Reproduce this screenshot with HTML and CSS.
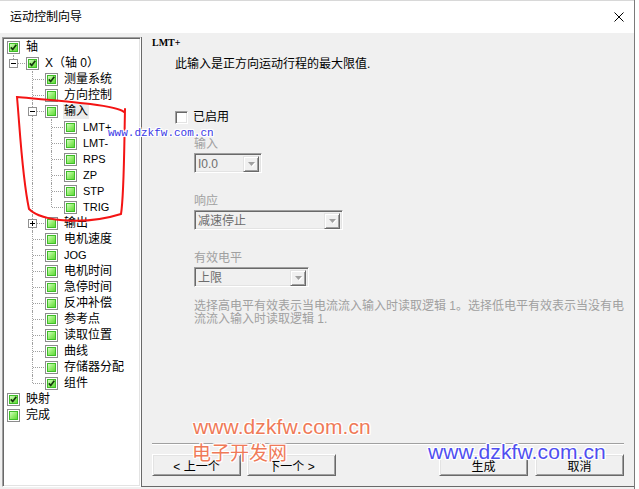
FILE: index.html
```html
<!DOCTYPE html>
<html lang="zh-CN">
<head>
    <meta charset="UTF-8">
    <title>运动控制向导</title>
    <link rel="stylesheet" href="styles.css">
</head>
<body>
    <div class="win">
        <!-- Pasek tytułu -->
        <div class="titlebar">
            <span>运动控制向导</span>
            <svg class="close" width="10" height="10" viewBox="0 0 10 10"><path d="M0.5 0.5L9.5 9.5M9.5 0.5L0.5 9.5"/></svg>
        </div>

        <div class="main">
            <!-- Drzewo po lewej -->
            <div class="tree">
                <div class="row"><span class="cb"><b><svg viewBox="0 0 7 7"><path d="M0.8 3.4l1.9 2 3.6-4.6"/></svg></b></span><span class="txt">轴</span></div>
                <div class="row"><span class="g l"><i class="exp"></i></span><span class="cb"><b><svg viewBox="0 0 7 7"><path d="M0.8 3.4l1.9 2 3.6-4.6"/></svg></b></span><span class="txt">X（轴 0）</span></div>
                <div class="row"><span class="g"></span><span class="g t"></span><span class="cb"><b><svg viewBox="0 0 7 7"><path d="M0.8 3.4l1.9 2 3.6-4.6"/></svg></b></span><span class="txt">测量系统</span></div>
                <div class="row"><span class="g"></span><span class="g t"></span><span class="cb"><b></b></span><span class="txt">方向控制</span></div>
                <div class="row"><span class="g"></span><span class="g t"><i class="exp"></i></span><span class="cb"><b></b></span><span class="txt sel">输入</span></div>
                <div class="row"><span class="g"></span><span class="g v"></span><span class="g t"></span><span class="cb"><b></b></span><span class="txt en">LMT+</span></div>
                <div class="row"><span class="g"></span><span class="g v"></span><span class="g t"></span><span class="cb"><b></b></span><span class="txt en">LMT-</span></div>
                <div class="row"><span class="g"></span><span class="g v"></span><span class="g t"></span><span class="cb"><b></b></span><span class="txt en">RPS</span></div>
                <div class="row"><span class="g"></span><span class="g v"></span><span class="g t"></span><span class="cb"><b></b></span><span class="txt en">ZP</span></div>
                <div class="row"><span class="g"></span><span class="g v"></span><span class="g t"></span><span class="cb"><b></b></span><span class="txt en">STP</span></div>
                <div class="row"><span class="g"></span><span class="g v"></span><span class="g l"></span><span class="cb"><b></b></span><span class="txt en">TRIG</span></div>
                <div class="row"><span class="g"></span><span class="g t"><i class="exp plus"></i></span><span class="cb"><b></b></span><span class="txt">输出</span></div>
                <div class="row"><span class="g"></span><span class="g t"></span><span class="cb"><b></b></span><span class="txt">电机速度</span></div>
                <div class="row"><span class="g"></span><span class="g t"></span><span class="cb"><b></b></span><span class="txt en">JOG</span></div>
                <div class="row"><span class="g"></span><span class="g t"></span><span class="cb"><b></b></span><span class="txt">电机时间</span></div>
                <div class="row"><span class="g"></span><span class="g t"></span><span class="cb"><b></b></span><span class="txt">急停时间</span></div>
                <div class="row"><span class="g"></span><span class="g t"></span><span class="cb"><b></b></span><span class="txt">反冲补偿</span></div>
                <div class="row"><span class="g"></span><span class="g t"></span><span class="cb"><b></b></span><span class="txt">参考点</span></div>
                <div class="row"><span class="g"></span><span class="g t"></span><span class="cb"><b></b></span><span class="txt">读取位置</span></div>
                <div class="row"><span class="g"></span><span class="g t"></span><span class="cb"><b></b></span><span class="txt">曲线</span></div>
                <div class="row"><span class="g"></span><span class="g t"></span><span class="cb"><b></b></span><span class="txt">存储器分配</span></div>
                <div class="row"><span class="g"></span><span class="g l"></span><span class="cb"><b><svg viewBox="0 0 7 7"><path d="M0.8 3.4l1.9 2 3.6-4.6"/></svg></b></span><span class="txt">组件</span></div>
                <div class="row"><span class="cb"><b><svg viewBox="0 0 7 7"><path d="M0.8 3.4l1.9 2 3.6-4.6"/></svg></b></span><span class="txt">映射</span></div>
                <div class="row"><span class="cb"><b></b></span><span class="txt">完成</span></div>
            </div>

            <!-- Strona po prawej -->
            <div class="page">
                <div class="head">LMT+</div>
                <div class="desc">此输入是正方向运动行程的最大限值.</div>

                <div class="enable"><span class="chk"></span><span>已启用</span></div>

                <div class="fields">
                    <div class="flabel">输入</div>
                    <div class="combo w1"><span class="val">I0.0</span><span class="drop"><svg width="7" height="4" viewBox="0 0 7 4"><path d="M0 0h7L3.5 4z"/></svg></span></div>

                    <div class="flabel">响应</div>
                    <div class="combo w2"><span class="val">减速停止</span><span class="drop"><svg width="7" height="4" viewBox="0 0 7 4"><path d="M0 0h7L3.5 4z"/></svg></span></div>

                    <div class="flabel">有效电平</div>
                    <div class="combo w3"><span class="val">上限</span><span class="drop"><svg width="7" height="4" viewBox="0 0 7 4"><path d="M0 0h7L3.5 4z"/></svg></span></div>

                    <p class="help">选择高电平有效表示当电流流入输入时读取逻辑 1。选择低电平有效表示当没有电流流入输入时读取逻辑 1.</p>
                </div>

                <div class="footer">
                    <div class="sep"></div>
                    <div class="btns">
                        <button class="btn">&lt; 上一个</button>
                        <button class="btn">下一个 &gt;</button>
                        <div class="right">
                            <button class="btn">生成</button>
                            <button class="btn">取消</button>
                        </div>
                    </div>
                </div>
            </div>
        </div>

        <!-- Nakładki: zakreślenie i znaki wodne -->
        <svg class="mark" width="140" height="140" viewBox="0 90 140 140"><path d="M124 112C116 105 62 101 17 97C20 130 22 176 29 209C42 222 86 225 121 214C124 196 124 158 125 109"/></svg>
        <div class="wm wm-mono">www.dzkfw.com.cn</div>
        <div class="wm wm-red">www.dzkfw.com.cn</div>
        <div class="wm wm-cn">电子开发网</div>
        <div class="wm wm-blue">www.dzkfw.com.cn</div>
    </div>
</body>
</html>
```

FILE: styles.css
```css
body {
    margin: 0;
    background: #fff;
    font-family: "Liberation Sans", "Noto Sans CJK SC", sans-serif;
    font-size: 12px;
    color: #000;
}
.win {
    position: relative;
    width: 635px;
    height: 489px;
    box-sizing: border-box;
    border-right: 1px solid #7a7a7a;
    display: flex;
    flex-direction: column;
    overflow: hidden;
}
.titlebar {
    height: 33px;
    flex: none;
    background: #fff;
    border-top: 1px solid #d8d8d8;
    box-sizing: border-box;
    display: flex;
    align-items: center;
    justify-content: space-between;
    padding: 0 10px;
    line-height: 16px;
}
.close path {
    stroke: #000;
    stroke-width: 1;
    fill: none;
}
.main {
    flex: 1;
    display: flex;
    background: #f0f0f0;
    padding: 4px 0 2px 2px;
}

/* drzewo */
.tree {
    width: 139px;
    flex: none;
    box-sizing: border-box;
    background: #fff;
    border: 1px solid;
    border-color: #a0a0a0 #fff #fff #a0a0a0;
    box-shadow: inset 1px 1px 0 #696969, inset -1px -1px 0 #e3e3e3;
    padding: 1px 0 0 1px;
}
.row {
    display: flex;
    align-items: center;
    height: 16px;
    padding-left: 3px;
    white-space: nowrap;
}
.g {
    position: relative;
    width: 19px;
    height: 16px;
    flex: none;
}
.g.v::before, .g.t::before, .g.l::before {
    content: '';
    position: absolute;
    left: 6px;
    top: 0;
    bottom: 0;
    border-left: 1px dotted #a0a0a0;
}
.g.l::before {
    bottom: 8px;
}
.g.t::after, .g.l::after {
    content: '';
    position: absolute;
    left: 7px;
    right: 1px;
    top: 8px;
    border-top: 1px dotted #a0a0a0;
}
.exp {
    position: absolute;
    z-index: 1;
    left: 2px;
    top: 4px;
    width: 9px;
    height: 9px;
    box-sizing: border-box;
    border: 1px solid #919191;
    background: #fff;
}
.exp::before {
    content: '';
    position: absolute;
    left: 1px;
    top: 3px;
    width: 5px;
    height: 1px;
    background: #000;
}
.exp.plus::after {
    content: '';
    position: absolute;
    left: 3px;
    top: 1px;
    width: 1px;
    height: 5px;
    background: #000;
}
.cb {
    flex: none;
    width: 13px;
    height: 13px;
    box-sizing: border-box;
    border: 1px solid #8c8c8c;
    padding: 1px;
    background: #fff;
}
.cb b {
    display: block;
    width: 9px;
    height: 9px;
    box-sizing: border-box;
    border: 1px solid #3fbd29;
    background: linear-gradient(135deg, #d3fbbf 0%, #8eec68 55%, #62d83d 100%);
}
.cb svg {
    display: block;
    width: 7px;
    height: 7px;
    fill: none;
    stroke: #17380f;
    stroke-width: 1.7;
}
.txt {
    margin-left: 5px;
    padding: 0 1px;
    line-height: 15px;
}
.txt.en {
    font-size: 11px;
}
.txt.sel {
    background: #ebebeb;
}

/* strona */
.page {
    flex: 1;
    display: flex;
    flex-direction: column;
    border-left: 1px solid #696969;
    border-bottom: 1px solid #696969;
}
.head {
    margin: 0 0 0 10px;
    font-family: "Liberation Serif", serif;
    font-weight: bold;
    font-size: 10px;
    line-height: 11px;
}
.desc {
    margin: 8px 0 0 33px;
    line-height: 16px;
}
.enable {
    display: flex;
    align-items: center;
    height: 13px;
    margin: 39px 0 0 33px;
    line-height: 13px;
}
.chk {
    width: 13px;
    height: 13px;
    box-sizing: border-box;
    background: #fff;
    border: 1px solid;
    border-color: #a0a0a0 #fff #fff #a0a0a0;
    box-shadow: inset 1px 1px 0 #696969, inset -1px -1px 0 #e3e3e3;
    margin-right: 5px;
}
.fields {
    margin-left: 52px;
}
.flabel {
    color: #a0a0a0;
    line-height: 14px;
    margin-top: 21px;
}
.fields .flabel:first-child {
    margin-top: 13px;
}
.combo {
    display: flex;
    margin-top: 2px;
    height: 20px;
    box-sizing: border-box;
    background: #f0f0f0;
    border: 1px solid;
    border-color: #a0a0a0 #fff #fff #a0a0a0;
    box-shadow: inset 1px 1px 0 #696969, inset -1px -1px 0 #e3e3e3;
    padding: 2px 2px 1px 2px;
}
.w1 { width: 68px; }
.w2 { width: 149px; }
.w3 { width: 115px; }
.val {
    flex: 1;
    padding-left: 1px;
    line-height: 16px;
    color: #6d6d6d;
}
.drop {
    width: 16px;
    height: 16px;
    box-sizing: border-box;
    display: flex;
    align-items: center;
    justify-content: center;
    border: 1px solid;
    border-color: #e3e3e3 #696969 #696969 #e3e3e3;
    box-shadow: inset 1px 1px 0 #fff, inset -1px -1px 0 #a0a0a0;
}
.drop svg {
    fill: #a0a0a0;
    filter: drop-shadow(1px 1px 0 #fff);
}
.help {
    margin: 13px 0 0;
    width: 434px;
    color: #a0a0a0;
    line-height: 13px;
}
.footer {
    margin-top: auto;
}
.sep {
    margin: 0 10px;
    border-top: 1px solid #a0a0a0;
    border-bottom: 1px solid #fff;
}
.btns {
    display: flex;
    gap: 6px;
    margin: 9px 10px 10px 10px;
}
.right {
    display: flex;
    gap: 7px;
    margin-left: auto;
}
.btn {
    width: 89px;
    height: 22px;
    padding: 0;
    font: inherit;
    color: #000;
    background: #f0f0f0;
    border: 1px solid;
    border-color: #fff #696969 #696969 #fff;
    box-shadow: inset 1px 1px 0 #e3e3e3, inset -1px -1px 0 #a0a0a0;
}

/* nakladki */
.mark {
    position: absolute;
    left: 0;
    top: 90px;
    pointer-events: none;
}
.mark path {
    fill: none;
    stroke: #f41414;
    stroke-width: 2;
    stroke-linecap: round;
}
.wm {
    position: absolute;
    white-space: nowrap;
    pointer-events: none;
    text-shadow: 1px 0 0 #fff, -1px 0 0 #fff, 0 1px 0 #fff, 0 -1px 0 #fff, 1px 1px 0 #fff, -1px -1px 0 #fff, 1px -1px 0 #fff, -1px 1px 0 #fff, 0 0 3px #fff;
}
.wm-mono {
    left: 108px;
    top: 127px;
    font-family: "Liberation Mono", monospace;
    font-size: 11px;
    line-height: 12px;
    color: #3838e6;
}
.wm-red {
    left: 193px;
    top: 416px;
    font-size: 21px;
    line-height: 21px;
    letter-spacing: 0.1px;
    color: #ef7a58;
}
.wm-cn {
    left: 192px;
    top: 442px;
    font-family: "Noto Sans CJK SC", sans-serif;
    font-size: 19px;
    line-height: 19px;
    color: #ef7a58;
}
.wm-blue {
    left: 428px;
    top: 441px;
    font-size: 21px;
    line-height: 21px;
    letter-spacing: 0.1px;
    color: #4f4ff0;
}
```
